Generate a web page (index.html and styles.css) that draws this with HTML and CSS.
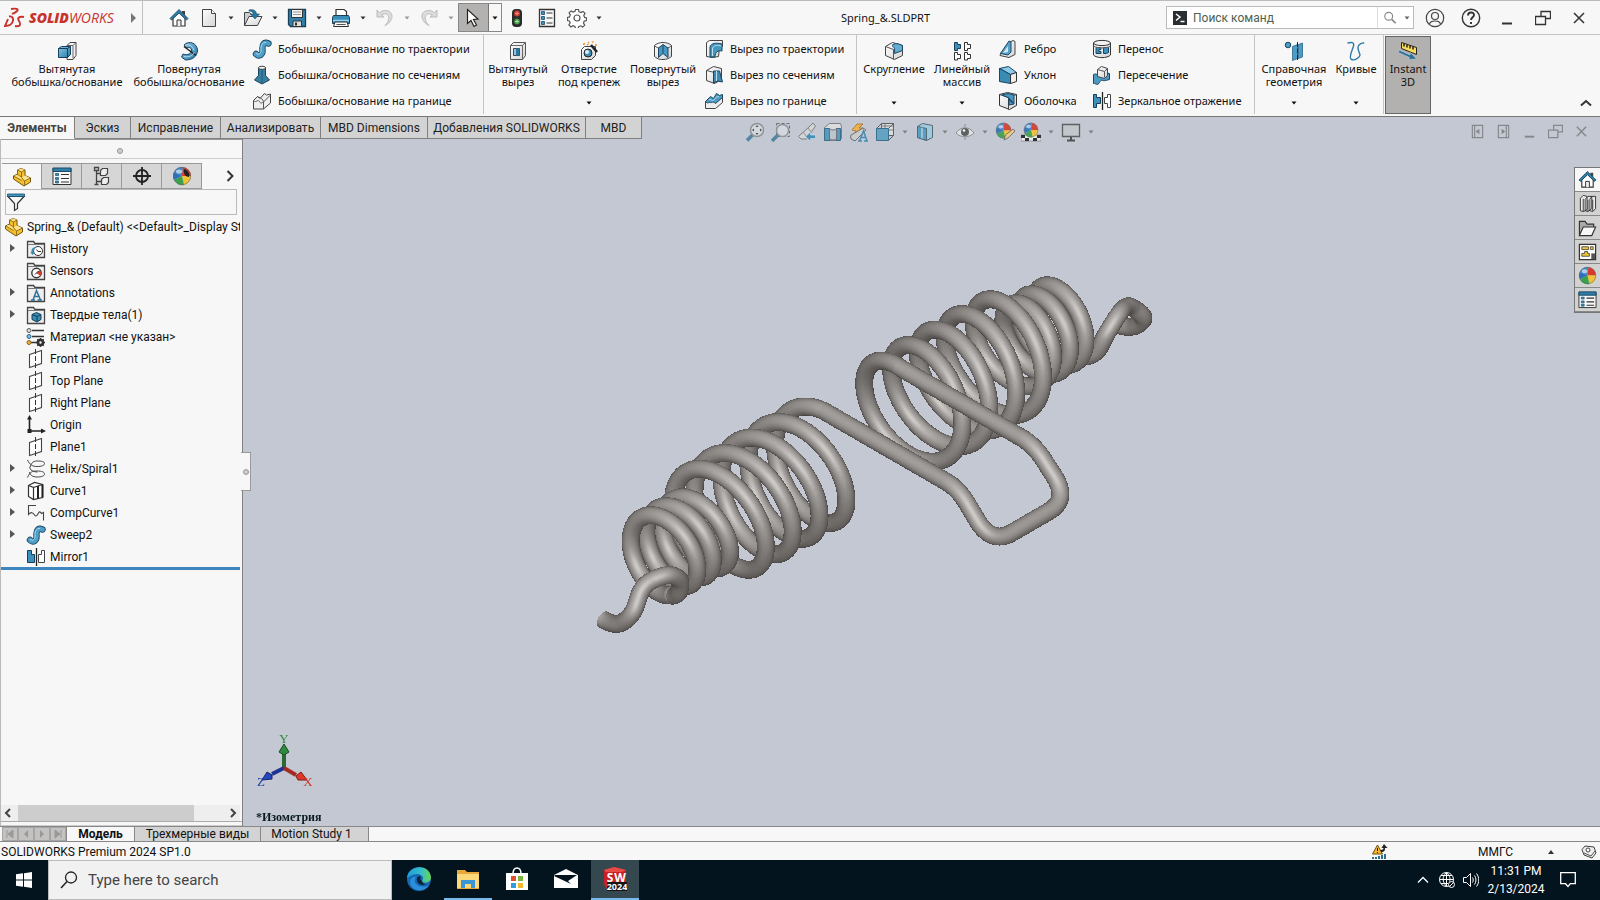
FILE: index.html
```html
<!DOCTYPE html>
<html lang="ru">
<head>
<meta charset="utf-8">
<title>Spring_&amp;.SLDPRT</title>
<link rel="stylesheet" href="styles.css">
</head>
<body>
<svg class="sprite" aria-hidden="true">
<defs>
<linearGradient id="gb" x1="0" y1="0" x2="1" y2="1"><stop offset="0" stop-color="#8cc8e6"/><stop offset="1" stop-color="#2478a4"/></linearGradient>
<linearGradient id="gw" x1="0" y1="0" x2="1" y2="1"><stop offset="0" stop-color="#fff"/><stop offset="1" stop-color="#d4d4d4"/></linearGradient>
<linearGradient id="edgeg" x1="0" y1="0" x2="1" y2="0"><stop offset="0" stop-color="#1f9ad8"/><stop offset=".6" stop-color="#35c1c9"/><stop offset="1" stop-color="#6bd34c"/></linearGradient>
</defs>
<symbol id="caret" viewBox="0 0 8 8"><path d="M1.500 2.500h5L4 5.500z" fill="currentColor"/></symbol>
<symbol id="home" viewBox="0 0 20 20"><path d="M4 10v8h12v-8l-6-6z" fill="#fff" stroke="#333" stroke-width="1.2"/><path d="M8 18v-6h4v6" fill="#eee" stroke="#333"/><path d="M13 3h3v5l-3-3z" fill="#444"/><path d="M1 10.500L10 1.500l9 9-1.500 1.500L10 5l-7.500 7z" fill="#2f7ea8" stroke="#143f5b" stroke-width=".8"/></symbol>
<symbol id="new" viewBox="0 0 20 20"><path d="M3.500 1.500h9l4 4v13h-13z" fill="url(#gw)" stroke="#444"/><path d="M12.500 1.500v4h4" fill="#fff" stroke="#444"/></symbol>
<symbol id="open" viewBox="0 0 20 20"><path d="M1.500 17.500v-13h5l2 2h6v3" fill="#ccc" stroke="#444"/><path d="M1.500 17.500L6 8.500h13l-4.500 9z" fill="url(#gw)" stroke="#444"/><path d="M6 2c4-1 7 0 7.500 4h3l-4.500 5-4.500-5h3C10 4 8 3 6 3z" fill="#2878a0" stroke="#174a66" stroke-width=".6"/></symbol>
<symbol id="save" viewBox="0 0 20 20"><path d="M1.500 1.500h17v17h-15l-2-2z" fill="#2f81ab" stroke="#1b3f54" stroke-width="1.300"/><path d="M4.500 1.500h11v8h-11z" fill="#f4f4f4" stroke="#333"/><path d="M6 4h8M6 6.500h8" stroke="#999"/><path d="M6 13h8.500v5.500H6z" fill="#ddd" stroke="#333"/><path d="M8 14.500h2v3H8z" fill="#333"/></symbol>
<symbol id="print" viewBox="0 0 20 20"><path d="M5 8V1.500h8l2.500 2V8" fill="#fff" stroke="#333" stroke-width="1.200"/><path d="M2.500 7.500h15l1 2v6h-17v-6z" fill="#3a8dba" stroke="#173f59"/><path d="M2 12.500h16" stroke="#99d6f2" stroke-width="1.500"/><path d="M4 14h12l1.500 4.500h-15z" fill="#f8f8f8" stroke="#333"/><path d="M5.500 16.500h9" stroke="#555"/></symbol>
<symbol id="undo" viewBox="0 0 20 20"><path d="M2 2v7h7L6.500 7C11 4 15 7 13.500 12c-.500 2-1.500 3.500-3.500 5.500C18 14 20 4 11.500 2.500 8.500 2 6 3.500 4.500 5z" fill="#ddd" stroke="#bbb"/></symbol>
<symbol id="cursor" viewBox="0 0 20 20"><path d="M3.500 1.500v14l3.500-3 3 6 2.500-1.500-3-5.500 4.500-.500z" fill="#fff" stroke="#222" stroke-width="1.200"/></symbol>
<symbol id="light" viewBox="0 0 20 20"><rect x="5" y="1" width="10" height="18" rx="4" fill="#2b2b2b"/><circle cx="10" cy="5.500" r="3" fill="#c73a30"/><circle cx="10" cy="13.500" r="3" fill="#3a9444"/><path d="M8 5.500h4M10 3.500v4" stroke="#ea8b80"/><path d="M8 13.500h4M10 11.500v4" stroke="#a7e0a9"/></symbol>
<symbol id="options" viewBox="0 0 20 20"><path d="M2.500 1.500h15v17h-15z" fill="#f8f8f8" stroke="#333" stroke-width="1.300"/><path d="M4.500 3.500h3v3h-3zM4.500 8.500h3v3h-3zM4.500 13.500h3v3h-3z" fill="#3b91c0" stroke="#1c4964" stroke-width=".8"/><path d="M9.500 5h6M9.500 10h6M9.500 15h6" stroke="#333"/></symbol>
<symbol id="gear" viewBox="0 0 20 20"><path d="M8.500 1.500h3l.500 2.300 2 .800 2-1.200 2 2-1.200 2 .800 2 1.900.600v2.500l-2.300.600-.700 2 1.200 2-2 2-2-1.300-2 .800-.600 1.900H8.500l-.600-2-2-.800-2 1.300-2-2 1.300-2-.900-2-1.800-.500V9.500l2-.600.800-2-1.200-2 2-2 2 1.200 1.900-.800z" fill="#fff" stroke="#555" stroke-width="1.200"/><circle cx="10" cy="10" r="3" fill="none" stroke="#555" stroke-width="1.200"/></symbol>
<symbol id="prompt" viewBox="0 0 14 14"><path d="M0 0h14v14H0z" fill="#2b2f33"/><path d="M3 3l4 3-4 3.500M7.500 10.500h4" stroke="#fff" stroke-width="1.500" fill="none"/></symbol>
<symbol id="lens" viewBox="0 0 16 16"><circle cx="6.500" cy="6" r="4.500" fill="none" stroke="#888" stroke-width="1.300"/><path d="M10 9.500l4.500 4.500" stroke="#888" stroke-width="2"/></symbol>
<symbol id="user" viewBox="0 0 20 20"><circle cx="10" cy="10" r="8.700" fill="none" stroke="#444" stroke-width="1.200"/><circle cx="10" cy="8" r="3.500" fill="none" stroke="#444" stroke-width="1.200"/><path d="M4.500 16c1-4 10-4 11 0" fill="none" stroke="#444" stroke-width="1.200"/></symbol>
<symbol id="help" viewBox="0 0 20 20"><circle cx="10" cy="10" r="8.700" fill="none" stroke="#333" stroke-width="1.400"/><path d="M7 7.500c0-4 6-4 6-.500 0 2-3 2.500-3 5M10 14v2" fill="none" stroke="#333" stroke-width="1.900"/></symbol>
<symbol id="min" viewBox="0 0 16 16"><path d="M3 13.500h10" stroke="currentColor" stroke-width="2"/></symbol>
<symbol id="restore" viewBox="0 0 16 16"><path d="M6 6V1.500h9.500v7H11M.500 6.500h10v8H.500z" fill="none" stroke="currentColor" stroke-width="1.300"/></symbol>
<symbol id="close" viewBox="0 0 16 16"><path d="M3 3l10 10M13 3L3 13" stroke="currentColor" stroke-width="1.500"/></symbol>
<symbol id="extrude" viewBox="0 0 20 20"><path d="M10 4.500l3-3h6v13l-3 4h-6z" fill="#f4f4f4" stroke="#444"/><path d="M16 4.500v13M10 4.500h6l3-3" fill="none" stroke="#666"/><path d="M1.500 7.500l3-2h9v8l-3 3h-9z" fill="url(#gb)" stroke="#173f59"/><path d="M1.500 7.500h9v9M10.500 7.500l3-2" fill="none" stroke="#173f59"/></symbol>
<symbol id="revolve" viewBox="0 0 20 20"><path d="M5 4C10-1 18 2 18.500 9c0 7-6 10-12 10l-4-3 1.500-3c5 2 9-1 8.500-4C12 6 9 6 7.500 7z" fill="url(#gb)" stroke="#1a4560"/><path d="M5 5.500l12 9" stroke="#222" stroke-width="1.500"/><path d="M6 4.500c4-2 8 1 9 5M5 15.500c5 1 9-1 10-4" fill="none" stroke="#b7ddf0"/></symbol>
<symbol id="sweep" viewBox="0 0 20 20"><path d="M4 15c3 3 7 1 6.500-4.500C10 5.500 12 2.500 16.500 4.500" fill="none" stroke="#1a4560" stroke-width="6.400" stroke-linecap="round"/><path d="M4 15c3 3 7 1 6.500-4.500C10 5.500 12 2.500 16.500 4.500" fill="none" stroke="#4f9fc8" stroke-width="4.600" stroke-linecap="round"/><path d="M4 14.500c4 2 5.500-1 5-5C9 5.500 11 3 14 3.500" fill="none" stroke="#a9d6ec"/></symbol>
<symbol id="loft" viewBox="0 0 20 20"><path d="M6.500 2.500h7v8l4 4.500-7.500 4-7.500-4 4-4.500z" fill="#377f9f" stroke="#1a4560"/><path d="M10 4v15" stroke="#225c7c"/><ellipse cx="10" cy="2.800" rx="3.500" ry="1.600" fill="#f3f3f3" stroke="#444"/></symbol>
<symbol id="bound" viewBox="0 0 20 20"><path d="M1.500 9.500l4-4 3 1.500 4-4.500 2 1.500 4-1v9l-7 6h-10z" fill="#eee" stroke="#444"/><path d="M1.500 9.500c3 3 4-2 6 1s2 1 4 .500v7M11.500 11l7-7M5.500 5.500c2 3 4 0 6 5" fill="none" stroke="#555"/></symbol>
<symbol id="cutex" viewBox="0 0 20 20"><path d="M2.500 4.500l3-3h12v13l-3 4h-12z" fill="url(#gw)" stroke="#555"/><path d="M2.500 4.500h12v14M14.500 4.500l3-3" fill="none" stroke="#666"/><path d="M5.500 7.500h6v7h-6z" fill="#8fc7e4" stroke="#444"/><path d="M8 7.500h3.500v7H8z" fill="#2878a4"/></symbol>
<symbol id="hole" viewBox="0 0 20 20"><path d="M2.500 8.500l3-3h11v9l-4 4h-10z" fill="url(#gw)" stroke="#444"/><circle cx="9" cy="12" r="4" fill="#3d8fb9" stroke="#222"/><circle cx="8" cy="11" r="2" fill="#dff0f8"/><path d="M12 4l6 7" stroke="#222" stroke-width="2.500"/><path d="M4 3.500l2-1M9 1l1 1M13 1.500l1.500-1M16 4h2M8 4l1.500-1" stroke="#e8952f" stroke-width="1.500"/></symbol>
<symbol id="cutrev" viewBox="0 0 20 20"><path d="M1.500 4.500v11c4 3 5 3 8.500 3s6-1 8.500-3v-11c-4-4-13-4-17 0z" fill="url(#gw)" stroke="#444"/><path d="M1.500 4.500c1.500 2 4 2.500 6 2.500h6c2 0 4-1 5-2.500" fill="none" stroke="#555"/><path d="M5.500 7L10 3.500 15 7v9.500l-5-4-4.500 4z" fill="#4799c3" stroke="#1a4560"/><path d="M10 4v8" stroke="#1a4560"/></symbol>
<symbol id="cutsweep" viewBox="0 0 20 20"><path d="M2.500 3.500l3-2h13v6l-3 1-1 9-6 1-6-1z" fill="url(#gw)" stroke="#444"/><path d="M6 18V8c1-4 6-4.500 12-3v7c-4-1-7 1-7 6z" fill="#4796bd" stroke="#1a4560"/><path d="M8.500 17V9c2-3 5-3 9-2" fill="none" stroke="#b9def0"/></symbol>
<symbol id="cutloft" viewBox="0 0 20 20"><path d="M2.500 5.500l7-4 8 2v11l-7 4-8-3z" fill="url(#gw)" stroke="#444"/><path d="M2.500 5.500l8 2v11" fill="none" stroke="#555"/><path d="M9.500 6h6l3 11-5-1-4 2z" fill="#3c8ab1" stroke="#1a4560"/><path d="M12.500 6v10" stroke="#b9def0"/></symbol>
<symbol id="cutbound" viewBox="0 0 20 20"><path d="M1.500 10.500v7h10l7-6v-7l-7 6z" fill="#eee" stroke="#444"/><path d="M1.500 10.500l5-5 3 2 3-5 3 2 3-1v3l-7 6c-3-3-4 0-5-1s-3 2-5-1z" fill="#4b9ac2" stroke="#1a4560"/><path d="M5 9c2-2 3 2 5 0s2-4 5-3" fill="none" stroke="#bfe2f2"/></symbol>
<symbol id="fillet" viewBox="0 0 20 20"><path d="M1.500 5.500l7-4 10 3v10l-8 4-9-4z" fill="url(#gw)" stroke="#444"/><path d="M1.500 5.500l8 3v10" fill="none" stroke="#555"/><path d="M8 4.500c3-3 6-2 10.500 0v5l-8 3c0-4 1-5-2.500-8z" fill="#64acd0" stroke="#1a4560"/></symbol>
<symbol id="pattern" viewBox="0 0 20 20"><path d="M2.500 1.500h3v2h3v4h-3v2h-3z" fill="#3d8fbc" stroke="#173f59"/><path d="M12.500 1.500h3v2h3v4h-3v2h-3zM2.500 11.500h3v2h3v4h-3v1.500h-3zM12.500 11.500h3v2h3v4h-3v1.500h-3z" fill="#fff" stroke="#333"/></symbol>
<symbol id="rib" viewBox="0 0 20 20"><path d="M11 3.500l4-2 2 1v13l-6 3-9-2 1-3h6z" fill="url(#gw)" stroke="#444"/><path d="M2.500 14.500L11 2l2 1v10l-3 3z" fill="#57a2c9" stroke="#1a4560"/><path d="M5 14l5-7v6z" fill="#cfe8f4"/></symbol>
<symbol id="draft" viewBox="0 0 20 20"><path d="M1.500 3.500l9-2 8 6-6 2z" fill="#8ccbe9" stroke="#1a4560"/><path d="M1.500 3.500l11 6v9l-11-2z" fill="#3b8cb4" stroke="#1a4560"/><path d="M12.500 9.500l6-2v9l-6 2z" fill="#eee" stroke="#333"/></symbol>
<symbol id="shell" viewBox="0 0 20 20"><path d="M1.500 3.500l8-2 9 2v11l-7 4-10-4z" fill="url(#gw)" stroke="#333"/><path d="M1.500 3.500l9 3 8-3M10.500 6.500v12" fill="none" stroke="#444"/><path d="M4 4l6-1.500L16 4v9l-5 1V7z" fill="#4a98c1" stroke="#1a4560"/><path d="M11 8l4 4" stroke="#173f59" stroke-width="1.500"/></symbol>
<symbol id="wrap" viewBox="0 0 20 20"><path d="M1.500 4v12c3 3.500 14 3.500 17 0V4" fill="url(#gw)" stroke="#333"/><ellipse cx="10" cy="4" rx="8.500" ry="2.600" fill="#f2f2f2" stroke="#333"/><path d="M4 8.500h5v2H7v2h2v2H4zM11.500 8.500h5v5l-2 1h-3z" fill="#3d8fbc" stroke="#1a4560"/><path d="M1.500 7c3 2.500 14 2.500 17 0" fill="none" stroke="#666"/></symbol>
<symbol id="inter" viewBox="0 0 20 20"><path d="M1.500 9.500c3-2 4 2 7 0s4-2 9-1v6l-4 1c-3 1-4-2-6 2s-5 0-6 1z" fill="#4b9ac2" stroke="#1a4560"/><path d="M5.500 4.500l4-3 6 2v7l-3 3-7-2z" fill="url(#gw)" stroke="#444"/><path d="M5.500 4.500l7 2 3-3M12.500 6.500v6" fill="none" stroke="#555"/></symbol>
<symbol id="mirror" viewBox="0 0 20 20"><path d="M1.500 3.500h3v3h4v6h-4v4h-3z" fill="#3d8fbc" stroke="#173f59"/><path d="M10.500 1v18" stroke="#222" stroke-width="1.300"/><path d="M18.500 3.500h-3v3h-3v6h3v4h3z" fill="#fff" stroke="#444"/></symbol>
<symbol id="mirror2" viewBox="0 0 20 20"><path d="M1.500 3.500h4v4h3v8h-7z" fill="#3d8fbc" stroke="#173f59"/><path d="M10.500 1v18" stroke="#222" stroke-width="1.300"/><path d="M18.500 3.500h-3v4h-3v8h6z" fill="#fff" stroke="#444"/></symbol>
<symbol id="refgeo" viewBox="0 0 20 20"><circle cx="4" cy="4" r="2.800" fill="#4a9ec8" stroke="#1a4560"/><path d="M8.500 5.500l5-2v14l-5 2z" fill="#4b9dc8" stroke="#2c6788" stroke-width=".8"/><path d="M14.500 3.500l4-1.500v14l-4 1.500z" fill="#4b9dc8" stroke="#2c6788" stroke-width=".8"/><path d="M13.500 1v18" stroke="#222" stroke-dasharray="5 1.500"/></symbol>
<symbol id="curves" viewBox="0 0 20 20"><path d="M1.500 2c4-1 7-1 6 3S2 17 5.500 18.500 14 16 14 14s-4-7-1-10 4-1 5-2.500" fill="none" stroke="#2d7ba6" stroke-width="1.400"/></symbol>
<symbol id="instant" viewBox="0 0 20 20"><path d="M3.500 1.500l15 5v7l-15-6z" fill="#fbdc5a" stroke="#222"/><path d="M6 2.500v3M9 3.500v3M12 4.500v3M15 5.500v3" stroke="#222" stroke-width="1.500"/><path d="M1 9l11 5 .500-2.500 6 6.500-8 .500 1-2-11-5z" fill="#2d6e95" stroke="#b8cfdb" stroke-width=".6"/></symbol>
<symbol id="part" viewBox="0 0 20 20"><path d="M5.500 3l3.500-1.500 4 1.500v5.500l5.500 2.500v4L12 19 1.500 12V9l4-2z" fill="#f6bf2c" stroke="#6e5512"/><path d="M5.500 3L9 1.500 13 3 9.500 5zM2 9l3.500-1.500L9.500 10v2.500L12.500 14z" fill="#fbdf80"/><path d="M9.500 10.500l3.500-2 5 2.500-5.500 3z" fill="#fbe293"/><path d="M5.500 3l4 2L13 3M9.500 5v5.500l3 3.500 6-3M12.500 14v5M5.500 3v4.500L9.500 10M1.500 9l8 4.500" fill="none" stroke="#8b6a15" stroke-width=".9"/></symbol>
<symbol id="prop" viewBox="0 0 20 20"><path d="M1 2.500h18v16H1z" fill="#f8f8f8" stroke="#333"/><path d="M1 2h18v3.500H1z" fill="#2e7eaa" stroke="#1b4a64"/><path d="M3.500 7.500h3v2h-3zM3.500 11.500h3v2h-3zM3.500 15h3v2h-3z" fill="#3b91c0" stroke="#1b4a64" stroke-width=".7"/><path d="M9 8.500h8M9 12.500h8M9 16h8" stroke="#333" stroke-width="1.200"/></symbol>
<symbol id="config" viewBox="0 0 20 20"><path d="M2.500 1.500h4v3h-4zM4.500 4.500v14M4.500 7.500h5M4.500 15.500h5M2.500 18.500h4" stroke="#444" stroke-width="1.300" fill="none"/><path d="M8.500 4.500l2-2h5v5l-2 2h-5zM9.500 13.500l2-2h5v5l-2 2h-5z" fill="#eee" stroke="#444" stroke-width="1.200"/></symbol>
<symbol id="dim" viewBox="0 0 20 20"><circle cx="10" cy="10" r="6" fill="none" stroke="#222" stroke-width="1.800"/><path d="M10 1v18M1 10h18" stroke="#222" stroke-width="1.800"/></symbol>
<symbol id="ball" viewBox="0 0 20 20"><path d="M10 10L2 6a9 9 0 0 1 9-5z" fill="#3b86c8"/><path d="M10 10l1-9a9 9 0 0 1 8 9z" fill="#d8392b"/><path d="M10 10h9a9 9 0 0 1-7 9z" fill="#f1c136"/><path d="M10 10l2 9a9 9 0 0 1-10-5z" fill="#3aa14b"/><path d="M10 10l-8 4a9 9 0 0 1 0-8z" fill="#2d70b8"/><circle cx="10" cy="10" r="8.700" fill="none" stroke="#666" stroke-width=".6"/><ellipse cx="7" cy="5.500" rx="3" ry="2" fill="#fff" opacity=".6"/></symbol>
<symbol id="ballw" viewBox="0 0 20 20"><use href="#ball"/><path d="M12 3c4 1 6 5 5 8-3 0-6-3-5-8z" fill="#222"/></symbol>
<symbol id="filter" viewBox="0 0 20 20"><path d="M2 4.500l6.500 7v7l3-2v-5l6.500-7z" fill="#f7f7f7" stroke="#333" stroke-width="1.200"/><path d="M1.500 2h17v2.500h-17z" fill="#3f97c4" stroke="#1c4c68" stroke-width=".8"/></symbol>
<symbol id="folder" viewBox="0 0 20 20"><path d="M1.500 4V2.500h6l1.500 2h9.500v14h-17z" fill="#eee" stroke="#444" stroke-width="1.300"/><path d="M2 5.500h16" stroke="#777"/></symbol>
<symbol id="history" viewBox="0 0 20 20"><use href="#folder"/><circle cx="12" cy="12" r="4.500" fill="#fff" stroke="#333"/><path d="M10.500 10.500l1.500 2h3" stroke="#333" fill="none"/><path d="M4 13l2.500 3L9 13.500H7.500c0-3 1-4 3.500-5-4-1-6 1.500-5.500 5z" fill="#3a8ab2"/></symbol>
<symbol id="sensor" viewBox="0 0 20 20"><use href="#folder"/><circle cx="10.500" cy="12" r="4.700" fill="#fff" stroke="#333" stroke-width="1.400"/><path d="M10.500 12l3-3 2 3-1 3z" fill="#d8392b"/><path d="M9 13.500l3.500-3.500" stroke="#222"/></symbol>
<symbol id="annot" viewBox="0 0 20 20"><use href="#folder"/><path d="M5 17h4M11.500 17H16M7 17l3.500-9.500L14.500 17M8.500 13.500h4.500" stroke="#2b7199" stroke-width="1.500" fill="none"/></symbol>
<symbol id="solid" viewBox="0 0 20 20"><use href="#folder"/><path d="M6 9.500l4.500-2 4.500 2v5l-4 2.500-5-2.500z" fill="#3a8cb7" stroke="#123c54"/><path d="M6 9.500l5 2v5M11 11.500l4-2" fill="none" stroke="#123c54"/></symbol>
<symbol id="material" viewBox="0 0 20 20"><path d="M6 3.500h12M6 9.500h12M5 15.500h6" stroke="#333" stroke-width="1.600"/><circle cx="3" cy="3.500" r="2" fill="#ddd" stroke="#555"/><circle cx="3" cy="9.500" r="2" fill="#7cc0e4" stroke="#2a6788"/><circle cx="3" cy="15.500" r="2" fill="#f3b13b" stroke="#84601b"/><circle cx="14.500" cy="15.500" r="2.500" fill="none" stroke="#333" stroke-width="2.600"/><path d="M14.500 11v2M14.500 18v2M10 15.500h2M17 15.500h2M11.300 12.300l1.500 1.500M17.700 12.300l-1.500 1.500M11.300 18.700l1.500-1.500M17.700 18.700l-1.500-1.500" stroke="#333" stroke-width="1.500"/></symbol>
<symbol id="plane" viewBox="0 0 20 20"><path d="M3.500 5.500l12-4v13l-12 4z" fill="#fff" stroke="#444" stroke-width="1.100"/><path d="M9.500 0v20" stroke="#333" stroke-dasharray="5 2"/></symbol>
<symbol id="origin" viewBox="0 0 20 20"><path d="M3.500 3v13h13" fill="none" stroke="#222" stroke-width="1.600"/><path d="M1 4.500L3.500 0 6 4.500zM15 13.500l5 2.500-5 2.500zM1.500 14h4v4h-4z" fill="#222"/></symbol>
<symbol id="helix" viewBox="0 0 20 20"><path d="M1.500 1c2.500 5 5 6.500 9.500 6.500s7.500-1 7.500-3-3-2.500-7.500-2.500S5 5 4 8s4 5 7.500 5M1.500 18.500C4 13 6 12 11 12s7.500 1 7.500 3-3 3-7.500 3-7-2-7.500-5" fill="none" stroke="#444"/></symbol>
<symbol id="curve" viewBox="0 0 20 20"><path d="M2.500 4.500l6-3 8 2v13l-9 2-5-3z" fill="#fff" stroke="#333" stroke-width="1.200"/><path d="M2.500 4.500l5 2v12M7.500 6.500l9-3" fill="none" stroke="#333" stroke-width="1.200"/><path d="M12 5v12.500M16.500 3.500v13" stroke="#222" stroke-width="2"/></symbol>
<symbol id="comp" viewBox="0 0 20 20"><path d="M10 2.500H2.500v9c2.500-3 4.500-2 6 .500s3 0 4-2 2-1 3 .500l2-1v8" fill="none" stroke="#444" stroke-width="1.100"/></symbol>
<symbol id="zoomfit" viewBox="0 0 20 20"><path d="M2 18.500l7-7" stroke="#4a7f9c" stroke-width="3.500"/><circle cx="12" cy="8" r="6.500" fill="#d4dade" stroke="#8b8f93" stroke-width="1.500"/><path d="M12 3l1.500 2h-3zM12 13l1.500-2h-3zM7 8l2-1.500v3zM17 8l-2-1.500v3z" fill="#444"/></symbol>
<symbol id="zoomarea" viewBox="0 0 20 20"><path d="M5.500 1.500h13v13h-13z" fill="none" stroke="#666" stroke-dasharray="3 2"/><path d="M1 19l7-7" stroke="#4a7f9c" stroke-width="3.500"/><circle cx="11.500" cy="8.500" r="6" fill="#d4dade" stroke="#8b8f93" stroke-width="1.500"/></symbol>
<symbol id="prev" viewBox="0 0 20 20"><path d="M1.500 14.500L13 4l3-3 2.500 3-9 13H4z" fill="#d5d5d5" stroke="#777"/><path d="M6 10l4 5M11 6l3 4" stroke="#888"/><path d="M8.500 14.500l5-4.500v3h5v3.500h-5v3z" fill="#3b8ab2" stroke="#d4e4ec" stroke-width=".6"/></symbol>
<symbol id="section" viewBox="0 0 20 20"><path d="M1.500 5.500l5-4h11l1 3v12l-3 2h-14z" fill="#ddd" stroke="#777"/><path d="M1.500 6.500h5v12h-5zM13.500 6.500h4v12h-4z" fill="#4c97bd" stroke="#31657f"/><path d="M6.500 6.500c2 2 5 2 7 0v10c-2 2-5 2-7 0z" fill="#bcc5cb" stroke="#667"/></symbol>
<symbol id="annview" viewBox="0 0 20 20"><path d="M3 8l5-6h6l-4 4h4L4 15l3-6z" fill="#f0b040" stroke="#a26a18" stroke-width=".8"/><path d="M1.500 13.500L14 6l3 2L6 19l-4-2z" fill="#ccc" stroke="#666"/><path d="M9 19h4M15 19h4M10.500 19l4-10 3.500 10M12 15.500h5" stroke="#3c88ae" stroke-width="1.500" fill="none"/></symbol>
<symbol id="orient" viewBox="0 0 20 20"><path d="M6.500 1.500h12v12h-12zM1.500 6.500l5-5M13.500 6.500l5-5M13.500 18.500l5-5" fill="#ddd" stroke="#555"/><path d="M10 2v12M6 8h12M6 4h12" stroke="#777"/><path d="M1.500 6.500h12v12h-12z" fill="#5a9fc2" stroke="#2e6582"/></symbol>
<symbol id="display" viewBox="0 0 20 20"><path d="M2.500 4.500l5-3 10 2v12l-6 3-9-3z" fill="#9dc9de" stroke="#46606c"/><path d="M2.500 4.500l9 2v12l-9-3z" fill="#4f9abf" stroke="#46606c"/><path d="M7 5.500v11" stroke="#d7e8f0"/></symbol>
<symbol id="eye" viewBox="0 0 20 20"><path d="M1 11C6 4 14 4 19 11c-5 5-13 5-18 0z" fill="#e4e6e8" stroke="#888"/><circle cx="10" cy="10" r="4" fill="#555"/><circle cx="9" cy="8.500" r="1.300" fill="#fff"/><path d="M10 2v3M10 15v3" stroke="#888"/></symbol>
<symbol id="appear" viewBox="0 0 20 20"><use href="#ball" width="17" height="17"/><path d="M9 18l1.500-5L18 7l2 2-7 7z" fill="#f1c87d" stroke="#555" stroke-width=".8"/></symbol>
<symbol id="scene" viewBox="0 0 20 20"><path d="M0 13h20v6H0z" fill="#eee" stroke="#444" stroke-width=".5"/><path d="M0 13h4v3H0zM8 16H4v3h4zM12 16h4v3h-4zM16 13h4v3h-4z" fill="#222"/><use href="#ball" x="2" width="16" height="16"/></symbol>
<symbol id="monitor" viewBox="0 0 20 20"><path d="M1.500 2.500h17v12h-17z" fill="#c3c7ca" stroke="#555" stroke-width="1.300"/><path d="M10 15v3M6 18.500h8" stroke="#444" stroke-width="2"/></symbol>
<symbol id="dockl" viewBox="0 0 16 16"><path d="M2.500 1.500h11v13h-11zM5 1.500v13" fill="none" stroke="currentColor" stroke-width="1.200"/><path d="M10 5v6L6 8z" fill="currentColor"/></symbol>
<symbol id="books" viewBox="0 0 20 20"><path d="M2.500 4.500l3-3 4 1v14l-4 2-3-1zM7.500 5.500l3-3 4 0v13l-4 3-3-1zM12.500 5.500l2-3h4v13l-3 3-3-1z" fill="#eee" stroke="#333"/><path d="M5.500 5v13M10.500 6v12M15.500 6v12" stroke="#333"/></symbol>
<symbol id="ofolder" viewBox="0 0 20 20"><path d="M1.500 18V3.500h6l2 3h7v4" fill="#aaa" stroke="#333" stroke-width="1.200"/><path d="M1.500 18.500l4-9h13l-4 9z" fill="#f8f8f8" stroke="#333" stroke-width="1.200"/></symbol>
<symbol id="palette" viewBox="0 0 20 20"><path d="M1.500 2.500h17v16h-17z" fill="#fff" stroke="#333" stroke-width="1.300"/><path d="M4 5h7v3H4zM13 5h3v3h-3zM4 15h8v-3h-2v-2H7v2H4z" fill="#f2c538" stroke="#333" stroke-width=".8"/><path d="M14 12h4v6h-4z" fill="#555"/></symbol>
</svg>

<header class="titlebar">
  <div class="brand">
    <svg class="ds" viewBox="0 0 22 22" fill="none" stroke="#c8322b"><path d="M7 2c5-1 8 0 6 2s-3 2-5 3M5 9.500C11 8 11 19 1 19l3-7" stroke-width="1.900"/><path d="M20 10c-5-1-7 1-5 4s2 6-4 5" stroke-width="1.900"/></svg>
    <span class="brand-name"><b>SOLID</b>WORKS</span>
    <button class="play" aria-label="Меню"></button>
  </div>
  <div class="quick">
    <button class="q"><svg class="i"><use href="#home"/></svg></button>
    <button class="q"><svg class="i"><use href="#new"/></svg></button><button class="c"><svg><use href="#caret"/></svg></button>
    <button class="q"><svg class="i"><use href="#open"/></svg></button><button class="c"><svg><use href="#caret"/></svg></button>
    <button class="q"><svg class="i"><use href="#save"/></svg></button><button class="c"><svg><use href="#caret"/></svg></button>
    <button class="q"><svg class="i"><use href="#print"/></svg></button><button class="c"><svg><use href="#caret"/></svg></button>
    <button class="q"><svg class="i"><use href="#undo"/></svg></button><button class="c off"><svg><use href="#caret"/></svg></button>
    <button class="q"><svg class="i flip"><use href="#undo"/></svg></button><button class="c off"><svg><use href="#caret"/></svg></button>
    <span class="select-tool"><button class="sel"><svg class="i"><use href="#cursor"/></svg></button><button class="selc"><svg><use href="#caret"/></svg></button></span>
    <button class="q"><svg class="i"><use href="#light"/></svg></button>
    <button class="q"><svg class="i"><use href="#options"/></svg></button>
    <button class="q"><svg class="i"><use href="#gear"/></svg></button><button class="c"><svg><use href="#caret"/></svg></button>
  </div>
  <h1 class="doc-title">Spring_&amp;.SLDPRT</h1>
  <div class="title-right">
    <label class="search"><svg class="prompt"><use href="#prompt"/></svg><input type="text" placeholder="Поиск команд" aria-label="Поиск команд"><span class="search-go"><svg class="lens"><use href="#lens"/></svg><svg class="sc"><use href="#caret"/></svg></span></label>
    <button class="w"><svg class="i"><use href="#user"/></svg></button>
    <button class="w"><svg class="i"><use href="#help"/></svg></button>
    <button class="w"><svg class="s"><use href="#min"/></svg></button>
    <button class="w"><svg class="s"><use href="#restore"/></svg></button>
    <button class="w"><svg class="s"><use href="#close"/></svg></button>
  </div>
</header>

<nav class="ribbon">
  <section class="group g1">
    <button class="big"><svg class="i"><use href="#extrude"/></svg><span>Вытянутая<br>бобышка/основание</span></button>
    <button class="big"><svg class="i"><use href="#revolve"/></svg><span>Повернутая<br>бобышка/основание</span></button>
    <div class="list">
      <button class="row"><svg class="i"><use href="#sweep"/></svg>Бобышка/основание по траектории</button>
      <button class="row"><svg class="i"><use href="#loft"/></svg>Бобышка/основание по сечениям</button>
      <button class="row"><svg class="i"><use href="#bound"/></svg>Бобышка/основание на границе</button>
    </div>
  </section>
  <section class="group g2">
    <button class="big short"><svg class="i"><use href="#cutex"/></svg><span>Вытянутый<br>вырез</span></button>
    <button class="big"><svg class="i"><use href="#hole"/></svg><span>Отверстие<br>под крепеж</span><svg class="dc"><use href="#caret"/></svg></button>
    <button class="big"><svg class="i"><use href="#cutrev"/></svg><span>Повернутый<br>вырез</span></button>
    <div class="list">
      <button class="row"><svg class="i"><use href="#cutsweep"/></svg>Вырез по траектории</button>
      <button class="row"><svg class="i"><use href="#cutloft"/></svg>Вырез по сечениям</button>
      <button class="row"><svg class="i"><use href="#cutbound"/></svg>Вырез по границе</button>
    </div>
  </section>
  <section class="group g3">
    <button class="big"><svg class="i"><use href="#fillet"/></svg><span>Скругление</span><svg class="dc"><use href="#caret"/></svg></button>
    <button class="big mid"><svg class="i"><use href="#pattern"/></svg><span>Линейный<br>массив</span><svg class="dc"><use href="#caret"/></svg></button>
    <div class="list">
      <button class="row"><svg class="i"><use href="#rib"/></svg>Ребро</button>
      <button class="row"><svg class="i"><use href="#draft"/></svg>Уклон</button>
      <button class="row"><svg class="i"><use href="#shell"/></svg>Оболочка</button>
    </div>
    <div class="list">
      <button class="row"><svg class="i"><use href="#wrap"/></svg>Перенос</button>
      <button class="row"><svg class="i"><use href="#inter"/></svg>Пересечение</button>
      <button class="row"><svg class="i"><use href="#mirror"/></svg>Зеркальное отражение</button>
    </div>
  </section>
  <section class="group g4">
    <button class="big"><svg class="i"><use href="#refgeo"/></svg><span>Справочная<br>геометрия</span><svg class="dc"><use href="#caret"/></svg></button>
    <button class="big narrow"><svg class="i"><use href="#curves"/></svg><span>Кривые</span><svg class="dc"><use href="#caret"/></svg></button>
  </section>
  <button class="big instant"><svg class="i"><use href="#instant"/></svg><span>Instant<br>3D</span></button>
  <button class="collapse" aria-label="Свернуть"><svg viewBox="0 0 12 8"><path d="M1 6.500l5-4.500 5 4.500" fill="none" stroke="#333" stroke-width="2"/></svg></button>
</nav>

<main class="workspace">
  <div class="tabs" role="tablist">
    <button class="tab on">Элементы</button><button class="tab">Эскиз</button><button class="tab">Исправление</button><button class="tab">Анализировать</button><button class="tab">MBD Dimensions</button><button class="tab">Добавления SOLIDWORKS</button><button class="tab">MBD</button>
  </div>
  <aside class="panel">
    <div class="grip"><i></i></div>
    <div class="ptabs">
      <button class="ptab on"><svg class="i"><use href="#part"/></svg></button>
      <button class="ptab"><svg class="i"><use href="#prop"/></svg></button>
      <button class="ptab"><svg class="i"><use href="#config"/></svg></button>
      <button class="ptab"><svg class="i"><use href="#dim"/></svg></button>
      <button class="ptab"><svg class="i"><use href="#ballw"/></svg></button>
      <button class="pmore" aria-label="Ещё"><svg viewBox="0 0 8 12"><path d="M1.500 1l5 5-5 5" fill="none" stroke="#333" stroke-width="2"/></svg></button>
    </div>
    <label class="filter"><svg class="i"><use href="#filter"/></svg><input type="text" aria-label="Фильтр"></label>
    <ul class="tree">
      <li class="root"><svg class="i"><use href="#part"/></svg>Spring_&amp; (Default) &lt;&lt;Default&gt;_Display State 1&gt;</li>
      <li class="kids"><svg class="i"><use href="#history"/></svg>History</li>
      <li><svg class="i"><use href="#sensor"/></svg>Sensors</li>
      <li class="kids"><svg class="i"><use href="#annot"/></svg>Annotations</li>
      <li class="kids"><svg class="i"><use href="#solid"/></svg>Твердые тела(1)</li>
      <li><svg class="i"><use href="#material"/></svg>Материал &lt;не указан&gt;</li>
      <li><svg class="i"><use href="#plane"/></svg>Front Plane</li>
      <li><svg class="i"><use href="#plane"/></svg>Top Plane</li>
      <li><svg class="i"><use href="#plane"/></svg>Right Plane</li>
      <li><svg class="i"><use href="#origin"/></svg>Origin</li>
      <li><svg class="i"><use href="#plane"/></svg>Plane1</li>
      <li class="kids"><svg class="i"><use href="#helix"/></svg>Helix/Spiral1</li>
      <li class="kids"><svg class="i"><use href="#curve"/></svg>Curve1</li>
      <li class="kids"><svg class="i"><use href="#comp"/></svg>CompCurve1</li>
      <li class="kids"><svg class="i"><use href="#sweep"/></svg>Sweep2</li>
      <li><svg class="i"><use href="#mirror2"/></svg>Mirror1</li>
    </ul>
    <div class="rollback"></div>
    <div class="hscroll"><svg viewBox="0 0 8 10"><path d="M6 1L2 5l4 4" fill="none" stroke="#444" stroke-width="2"/></svg><span class="track"><i></i></span><svg viewBox="0 0 8 10"><path d="M2 1l4 4-4 4" fill="none" stroke="#444" stroke-width="2"/></svg></div>
    <div class="foot"></div>
  </aside>
  <section class="viewport">
    <canvas id="model"></canvas>
    <div class="splitter"><i></i></div>
    <div class="hud">
      <button><svg class="i"><use href="#zoomfit"/></svg></button><button><svg class="i"><use href="#zoomarea"/></svg></button><button><svg class="i"><use href="#prev"/></svg></button><button><svg class="i"><use href="#section"/></svg></button><button><svg class="i"><use href="#annview"/></svg></button><button><svg class="i"><use href="#orient"/></svg></button><button class="hc"><svg><use href="#caret"/></svg></button><button><svg class="i"><use href="#display"/></svg></button><button class="hc"><svg><use href="#caret"/></svg></button><button><svg class="i"><use href="#eye"/></svg></button><button class="hc"><svg><use href="#caret"/></svg></button><button><svg class="i"><use href="#appear"/></svg></button><button><svg class="i"><use href="#scene"/></svg></button><button class="hc"><svg><use href="#caret"/></svg></button><button><svg class="i"><use href="#monitor"/></svg></button><button class="hc"><svg><use href="#caret"/></svg></button>
    </div>
    <div class="docwin">
      <button><svg><use href="#dockl"/></svg></button><button><svg class="flip"><use href="#dockl"/></svg></button><button><svg><use href="#min"/></svg></button><button><svg><use href="#restore"/></svg></button><button><svg><use href="#close"/></svg></button>
    </div>
    <div class="taskpane">
      <button class="on"><svg class="i"><use href="#home"/></svg></button><button><svg class="i"><use href="#books"/></svg></button><button><svg class="i"><use href="#ofolder"/></svg></button><button><svg class="i"><use href="#palette"/></svg></button><button><svg class="i"><use href="#ball"/></svg></button><button><svg class="i"><use href="#prop"/></svg></button>
    </div>
    <div class="triad">
      <svg viewBox="0 0 64 60"><path d="M30 35V20" stroke="#2a6b35" stroke-width="4"/><path d="M30 11l5 8-5 3-5-3z" fill="#2f8a3d" stroke="#174d20"/><path d="M30 35L18 41" stroke="#1d3494" stroke-width="4"/><path d="M8 47l5-8 5 3v4z" fill="#2447c0" stroke="#132468"/><path d="M30 35l12 7" stroke="#a52a22" stroke-width="4"/><path d="M53 47l-6-8-5 4 2 4z" fill="#e0362c" stroke="#7d1a14"/><text x="30" y="10" text-anchor="middle" fill="#2c8a3a">Y</text><text x="54" y="53" text-anchor="middle" fill="#d23228">X</text><text x="7" y="53" text-anchor="middle" fill="#2038a8">Z</text></svg>
      <p>*Изометрия</p>
    </div>
  </section>
</main>

<div class="modeltabs">
  <div class="navs">
    <button><svg viewBox="0 0 10 10"><path d="M2 1v8M8 1L3 5l5 4z" fill="#999" stroke="#999"/></svg></button><button><svg viewBox="0 0 10 10"><path d="M7 1L3 5l4 4z" fill="#999"/></svg></button><button><svg viewBox="0 0 10 10"><path d="M3 1l4 4-4 4z" fill="#999"/></svg></button><button><svg viewBox="0 0 10 10"><path d="M8 1v8M2 1l5 4-5 4z" fill="#999" stroke="#999"/></svg></button>
  </div>
  <button class="mtab on">Модель</button><button class="mtab">Трехмерные виды</button><button class="mtab study">Motion Study 1</button>
</div>
<footer class="status">
  <span>SOLIDWORKS Premium 2024 SP1.0</span>
  <div class="status-right">
    <svg class="warn" viewBox="0 0 16 16"><path d="M5.500 1L10.500 10H.500z" fill="#f5b733" stroke="#6f4e0c"/><path d="M5.500 4v3M5.500 8v1" stroke="#222"/><path d="M1 15v-2M4 15v-2M7 15v-3M10 15v-4M13 15v-5" stroke="#2d6e94" stroke-width="2"/><path d="M9 8c4 0 4-2 4-4h2.500L12 0 9.500 4h2c0 1-1 2-3 2z" fill="#222"/></svg>
    <button class="units">ММГС</button>
    <svg class="up" viewBox="0 0 6 4"><path d="M0 4h6L3 0z" fill="#333"/></svg>
    <svg class="tag" viewBox="0 0 16 14"><path d="M1 4.500L4 1l9 1 2 6-4 5-8-3z" fill="#eee" stroke="#444"/><circle cx="7" cy="5" r="2" fill="#fff" stroke="#444"/><path d="M3 8l7 3 4-5" fill="none" stroke="#555"/></svg>
  </div>
</footer>

<div class="taskbar">
  <button class="start" aria-label="Start"><svg viewBox="0 0 16 16"><path d="M0 2.300l7-1v6.200H0zM8 1.200L16 0v7.500H8zM0 8.500h7v6.200l-7-1zM8 8.500h8V16l-8-1.200z" fill="#fff"/></svg></button>
  <label class="wsearch"><svg viewBox="0 0 18 18"><circle cx="11" cy="6.500" r="5.500" fill="none" stroke="#222" stroke-width="1.300"/><path d="M7 10.500L1 17" stroke="#222" stroke-width="1.500"/></svg><input type="text" placeholder="Type here to search" aria-label="Search"></label>
  <div class="apps">
    <button><svg viewBox="0 0 24 24"><circle cx="12" cy="12" r="12" fill="#1768b5"/><path d="M0 11C1-2 22-4 24 10c0 6-7 7-9 4 3-4-1-7-5-7-5 0-8 3-10 4z" fill="url(#edgeg)"/><path d="M9 10c-4 5 1 12 13 9-5 5-12 6-17 1C1 15 4 9 9 10z" fill="#2c8fdc"/><path d="M15 14c-2-1-2-3-1-4-2-2-5 0-4 4s6 5 11 3c-2 1-6 0-6-3z" fill="#0d2430"/></svg></button>
    <button class="live"><svg viewBox="0 0 24 24"><path d="M1 3h8l2 2h12v17H1z" fill="#e8a93a"/><path d="M1 7h22v14H1z" fill="#fbd97b"/><path d="M5 21v-8h14v8h-4v-4H9v4z" fill="#3b94d4"/></svg></button>
    <button><svg viewBox="0 0 24 24"><path d="M8 7c0-8 8-8 8 0" fill="none" stroke="#fff" stroke-width="1.500"/><path d="M1 6h22v17H1z" fill="#fff"/><path d="M6 9h5v5H6z" fill="#e04f2e"/><path d="M13 9h5v5h-5z" fill="#7ab53a"/><path d="M6 16h5v5H6z" fill="#2f9edb"/><path d="M13 16h5v5h-5z" fill="#f2b72c"/></svg></button>
    <button><svg viewBox="0 0 24 24"><path d="M0 8l12-6 12 6v13H0z" fill="#fff"/><path d="M1 8h22l-9 6 3 3L0 9z" fill="#04141e"/></svg></button>
    <button class="active"><svg viewBox="0 0 24 24"><path d="M1 3l10-3 12 3v13l-6 5H3l-2-4z" fill="#c92026"/><path d="M1 3l10-3 12 3-4 2H3z" fill="#e84a45"/><text x="7" y="15" class="swl">S</text><text x="17" y="15" class="swl">W</text><path d="M4 15h20v9H4z" fill="#151515"/><text x="14" y="23" class="swy">2024</text></svg></button>
  </div>
  <div class="tray">
    <svg class="chev" viewBox="0 0 12 8"><path d="M1 6.500L6 1.500l5 5" fill="none" stroke="#fff" stroke-width="1.300"/></svg>
    <svg viewBox="0 0 16 16" fill="none" stroke="#fff"><circle cx="7.500" cy="7.500" r="7"/><path d="M.500 7.500h14M7.500.500v14M2 3.500h11M2 11.500h7M7.500.500c-5 5-4 9 0 14M7.500.500c4 4 4 7 3 9"/><circle cx="12.500" cy="12.500" r="3" fill="#04121c"/><path d="M10.500 14.500l4-4"/></svg>
    <svg viewBox="0 0 16 16" fill="none" stroke="#fff"><path d="M.500 5.500h3l4-4v13l-4-4h-3zM9.500 5.500c1 1.500 1 3.500 0 5M11.500 3.500c2 3 2 6 0 9M13.500 1.500c3 4 3 9 0 13"/></svg>
    <time>11:31 PM<br>2/13/2024</time>
    <svg class="note" viewBox="0 0 16 16"><path d="M.700.700h14.600v11h-5L8 14.500l-2.500-2.800H.700z" fill="none" stroke="#fff" stroke-width="1.300"/></svg>
  </div>
</div>
<script src="model.js"></script>
</body>
</html>
```

FILE: styles.css
```css
* { box-sizing: border-box; }
body {
  margin: 0;
  height: 100vh;
  display: flex;
  flex-direction: column;
  overflow: hidden;
  background: #f7f7f7;
  color: #111;
  font: 12px/16px Roboto, "Noto Sans", sans-serif;
}
button, input { font: inherit; color: inherit; border: 0; padding: 0; margin: 0; background: none; outline: 0; }
button { display: flex; align-items: center; justify-content: center; }
svg { display: block; flex: none; }
.sprite { position: absolute; width: 0; height: 0; }
.i { width: 20px; height: 20px; }
.flip { transform: scaleX(-1); }

/* title bar */
.titlebar { display: flex; align-items: center; height: 35px; border-top: 1px solid #bbb; border-bottom: 1px solid #c4c4c4; position: relative; flex: none; }
.brand { display: flex; align-items: center; width: 143px; height: 100%; border-right: 1px solid #c0c0c0; padding-left: 4px; }
.ds { width: 22px; height: 22px; margin-right: 3px; }
.brand-name { color: #c8322b; font: italic 14px/20px "Open Sans", sans-serif; flex: 1; }
.brand-name b { font-weight: 800; }
.play { width: 0; height: 0; border: 5px solid transparent; border-left: 5px solid #777; border-right: 0; margin-right: 6px; }
.quick { display: flex; align-items: center; padding-left: 21px; height: 100%; }
.q { width: 30px; }
.c { width: 14px; color: #333; }
.c svg, .selc svg { width: 8px; height: 8px; }
.off { color: #999; }
.select-tool { display: flex; width: 44px; height: 29px; border: 1px solid #888; }
.sel { width: 30px; background: #b4b2b0; border-right: 1px solid #777; }
.selc { flex: 1; }
.doc-title { position: absolute; left: 841px; font: 400 11px/16px "Noto Sans", sans-serif; margin: 0; }
.title-right { display: flex; align-items: center; margin-left: auto; padding-right: 3px; }
.search { display: flex; align-items: center; width: 248px; height: 23px; border: 1px solid #bbb; background: #fff; margin-right: 3px; }
.search input { flex: 1; min-width: 0; padding-left: 6px; color: #4e6150; }
.search input::placeholder { color: #4e6150; opacity: 1; }
.prompt { width: 14px; height: 14px; margin-left: 6px; }
.search-go { display: flex; align-items: center; width: 36px; height: 100%; border-left: 1px solid #ddd; padding-left: 5px; gap: 6px; }
.lens { width: 14px; height: 14px; }
.sc { width: 8px; height: 8px; color: #666; }
.w { width: 36px; color: #333; }
.s { width: 16px; height: 16px; }

/* ribbon */
.ribbon { display: flex; height: 82px; border-bottom: 1px solid #777; flex: none; padding-bottom: 2px; font: 11px/16px "Noto Sans", sans-serif; }
.group { display: flex; border-right: 1px solid #c4c4c4; flex: none; }
.big { flex: none; flex-direction: column; justify-content: flex-start; padding-top: 6px; line-height: 13px; text-align: center; white-space: nowrap; }
.big span { padding-top: 1px; }
.group .big { width: 74px; }
.g1 .big { width: 122px; }
.g1 { padding-left: 6px; width: 484px; }
.g2 { width: 373px; }
.g3 { width: 398px; }
.g4 { width: 129px; padding-left: 2px; }
.dc { width: 8px; height: 8px; margin-top: auto; margin-bottom: 7px; }
.list { display: flex; flex-direction: column; flex: none; padding: 1px 0 0 2px; }
.g3 .list { width: 94px; padding-left: 5px; }
.row { height: 26px; gap: 6px; justify-content: flex-start; white-space: nowrap; }
.group .short { width: 68px; }
.group .mid { width: 62px; }
.group .narrow { width: 50px; }
.g2 .list { padding-left: 4px; }
.instant { width: 46px; background: #b2b1b0; border: 1px solid #666; margin: 1px 0 0 1px; padding-top: 4px; }
.collapse { margin-left: auto; align-items: flex-end; padding: 0 8px 7px 0; }
.collapse svg { width: 12px; height: 8px; }

/* workspace */
.workspace { flex: 1; display: flex; min-height: 0; position: relative; }
.tabs { position: absolute; z-index: 2; left: 0; top: 0; display: flex; height: 22px; }
.tab { height: 22px; background: #d3d3d3; border: solid #808080; border-width: 0 1px 1px 0; color: #222; white-space: nowrap; width: 56px; }
.tab:nth-child(3) { width: 90px; }
.tab:nth-child(4) { width: 100px; }
.tab:nth-child(5) { width: 107px; }
.tab:nth-child(6) { width: 158px; }
.tab.on { width: 75px; background: #f7f7f7; font-weight: 700; color: #46443c; border-bottom-color: #f7f7f7; }
.panel { width: 243px; display: flex; flex-direction: column; padding-top: 22px; background: #f7f7f7; border-right: 1px solid #808080; border-left: 1px solid #bbb; overflow: hidden; flex: none; }
.grip { height: 20px; border-top: 1px solid #999; border-bottom: 1px solid #ccc; display: flex; align-items: center; justify-content: center; padding: 4px 4px 0 0; flex: none; }
.grip i, .splitter i { width: 6px; height: 6px; border-radius: 50%; border: 1px solid #999; background: #ccc; }
.ptabs { display: flex; height: 26px; margin: 4px 0 0 1px; flex: none; }
.ptab { width: 40px; background: #d6d6d6; border: 1px solid #999; border-left: 0; }
.ptab.on { background: #f7f7f7; border-bottom: 0; }
.pmore { flex: 1; padding-left: 15px; }
.pmore svg { width: 8px; height: 12px; }
.filter { display: flex; align-items: center; height: 26px; margin: 0 5px 0 4px; border: 1px solid #bbb; flex: none; }
.filter input { flex: 1; min-width: 0; }
.tree { list-style: none; margin: 1px 2px 0 0; padding: 0; overflow: hidden; flex: none; }
.tree li { display: flex; align-items: center; height: 22px; padding-left: 25px; gap: 4px; white-space: nowrap; position: relative; }
.tree .root { padding-left: 3px; gap: 3px; }
.kids::before { content: ""; position: absolute; left: 9px; top: 6px; border: 4px solid transparent; border-left: 5px solid #555; border-right: 0; }
.rollback { height: 3px; background: #3d86c0; flex: none; margin: -1px 2px 0 0; }
.hscroll { display: flex; align-items: center; height: 16px; margin: auto 2px 0 0; background: #eee; padding: 0 3px; gap: 6px; flex: none; }
.hscroll svg { width: 8px; height: 10px; }
.track { flex: 1; height: 16px; }
.track i { display: block; width: 86%; height: 16px; background: #cdcdcd; }
.foot { height: 5px; border-top: 1px solid #aaa; border-bottom: 1px solid #ccc; flex: none; }

.viewport { flex: 1; position: relative; background: #c3c8d3; min-width: 0; }
#model { position: absolute; inset: 0; width: 100%; height: 100%; }
.splitter { position: absolute; left: -2px; top: 335px; width: 10px; height: 39px; background: #f7f7f7; border: 1px solid #999; border-left: 0; display: flex; align-items: center; justify-content: center; }
.hud { position: absolute; top: 3px; left: 0; right: 4px; display: flex; justify-content: center; height: 24px; opacity: .9; }
.hud button { width: 26px; }
.hud .hc { width: 14px; color: #777; }
.hc svg { width: 8px; height: 8px; }
.docwin { position: absolute; top: 7px; right: 6px; display: flex; color: #85878b; }
.docwin button { width: 26px; }
.docwin svg { width: 15px; height: 15px; }
.taskpane { position: absolute; right: 0; top: 50px; width: 26px; border: 1px solid #777; border-right: 0; }
.taskpane button { width: 25px; height: 24px; background: #d2d2d2; border-bottom: 1px solid #888; }
.taskpane button.on { background: #f7f7f7; }
.taskpane .i { width: 19px; height: 19px; }
.triad { position: absolute; left: 11px; bottom: 0; font-family: "Liberation Serif", serif; }
.triad svg { width: 64px; height: 60px; overflow: visible; font-size: 13px; }
.triad p { margin: 16px 0 1px 2px; font-weight: 700; color: #0a1a22; }

/* model tabs and status */
.modeltabs { display: flex; height: 16px; border-top: 1px solid #888; border-bottom: 1px solid #888; flex: none; }
.navs { display: flex; width: 67px; padding-left: 2px; border-right: 1px solid #888; }
.navs button { width: 16px; background: #c4c2c0; border: 1px solid #a5a5a5; }
.navs svg { width: 10px; height: 10px; }
.mtab { width: 126px; background: #d3d3d3; border-right: 1px solid #888; }
.mtab.on { width: 68px; background: #f7f7f7; font-weight: 700; }
.mtab.study { width: 108px; padding-right: 6px; }
.status { display: flex; align-items: center; height: 18px; padding: 1px 1px 0; flex: none; }
.status-right { display: flex; align-items: center; margin-left: auto; }
.warn { width: 16px; height: 16px; margin-right: 90px; }
.up { width: 6px; height: 4px; margin: 0 27px 0 35px; }
.tag { width: 16px; height: 14px; margin-right: 2px; }

/* taskbar */
.taskbar { display: flex; height: 40px; background: #04141e; color: #fff; flex: none; }
.start { width: 48px; }
.start svg { width: 16px; height: 16px; }
.wsearch { display: flex; align-items: center; width: 344px; background: #f1f1f1; border: 1px solid #bbb; padding-left: 11px; gap: 10px; color: #333; font-size: 15px; }
.wsearch svg { width: 18px; height: 18px; }
.wsearch input { flex: 1; min-width: 0; }
.wsearch input::placeholder { color: #444; opacity: 1; }
.apps { display: flex; padding-left: 3px; }
.apps button { width: 48px; border-bottom: 2px solid transparent; margin-right: 1px; }
.apps svg { width: 24px; height: 24px; }
.apps .live { border-bottom-color: #76b9ed; }
.apps .active { background: #35474f; border-bottom-color: #76b9ed; }
.swl { font: 700 12px "Open Sans", sans-serif; fill: #fff; text-anchor: middle; }
.swy { font: 700 9px "Open Sans", sans-serif; fill: #fff; text-anchor: middle; }
.tray { display: flex; align-items: center; margin-left: auto; gap: 8px; padding-right: 24px; }
.tray svg { width: 16px; height: 16px; }
.tray .chev { width: 12px; height: 8px; margin-right: 2px; }
.tray time { text-align: center; line-height: 18px; width: 58px; margin-right: 7px; }
```

FILE: model.js
```js
// Draws the torsion spring as a shaded tube with a depth buffer, isometric view.
(function () {
  var canvas = document.getElementById("model");
  var w = canvas.clientWidth, h = canvas.clientHeight;
  canvas.width = w;
  canvas.height = h;
  var ctx = canvas.getContext("2d");
  var img = ctx.createImageData(w, h);
  var depth = new Float32Array(w * h).fill(-1e9);
  var ox = w / 2 - 60, oy = h / 2 - 34, r = 9;
  var cutX = -1e9; // surface with a smaller X is trimmed, which gives a flat wire end

  function smooth(t) { t = Math.max(0, Math.min(1, t)); return t * t * (3 - 2 * t); }

  function sphere(X, Y, Z) {
    var cx = ox + 0.7071 * (X - Z);
    var cy = oy + 0.4082 * (X + Z) - 0.8165 * Y;
    var cz = 0.57735 * (X + Y + Z);
    for (var y = Math.ceil(cy - r); y <= cy + r; y++) {
      for (var x = Math.ceil(cx - r); x <= cx + r; x++) {
        if (x < 0 || y < 0 || x >= w || y >= h) continue;
        var nx = (x - cx) / r, ny = (y - cy) / r, q = 1 - nx * nx - ny * ny;
        if (q < 0) continue;
        var nz = Math.sqrt(q), z = cz + nz * r, k = y * w + x;
        if (z <= depth[k]) continue;
        if (X + r * (0.7071 * nx + 0.4082 * ny + 0.57735 * nz) < cutX) continue;
        depth[k] = z;
        var d = Math.max(0, -0.2 * nx - 0.6 * ny + 0.75 * nz);
        var v = 64 + 76 * nz + 40 * d * (0.5 + 0.5 * nz) + 34 * Math.pow(nz, 20);
        img.data[k * 4] = v + 1;
        img.data[k * 4 + 1] = v - 2;
        img.data[k * 4 + 2] = v - 5;
        img.data[k * 4 + 3] = 255;
      }
    }
  }

  function both(p) { sphere(p[0], p[1], p[2]); sphere(p[0], p[1], -p[2]); }

  function line(a, b) {
    var n = Math.ceil(Math.hypot(b[0] - a[0], b[1] - a[1], b[2] - a[2]) * 2) + 1;
    for (var i = 0; i <= n; i++) both(mix(a, b, i / n));
  }
  function mix(a, b, t) { return [0, 1, 2].map(function (i) { return a[i] + (b[i] - a[i]) * t; }); }
  function toward(a, b, d) {
    return mix(a, b, d / Math.hypot(b[0] - a[0], b[1] - a[1], b[2] - a[2]));
  }
  function bend(a, c, b) {
    for (var i = 0; i <= 160; i++) both(mix(mix(a, c, i / 160), mix(c, b, i / 160), i / 160));
  }

  // Coils: wide turns first, then a tighter and narrower end.
  var marks = [[0, 53.5], [4, 205.5], [5, 236], [6, 258], [7, 280], [7.7, 296]];
  function lead(t) {
    for (var i = 1; i < marks.length; i++) {
      if (t <= marks[i][0]) {
        var a = marks[i - 1], b = marks[i];
        return a[1] + (b[1] - a[1]) * (t - a[0]) / (b[0] - a[0]);
      }
    }
    return 296;
  }
  for (var t = 0; t <= 7.6; t += 0.0012) {
    var R = 59.6 - 18.3 * smooth((t - 4) / 0.7), ang = Math.PI / 2 + t * 2 * Math.PI;
    both([R * Math.cos(ang), R * Math.sin(ang), lead(t)]);
  }

  // Hook at the outer end.
  cutX = -3;
  var hook = [[13, -39, 291], [25, -34, 293], [37, -22, 296], [44, -1, 302], [44, 13, 318], [37, 11, 335], [35, 4, 347], [37, -14, 361], [23, -33, 364], [4, -42, 363], [-14, -41, 363], [-24, -38, 363]];
  for (var s = 1; s < hook.length - 2; s++) {
    for (var j = 0; j <= 80; j++) {
      var u = j / 80;
      both([0, 1, 2].map(function (i) {
        var a = hook[s - 1][i], b = hook[s][i], c = hook[s + 1][i], d = hook[s + 2][i];
        return 0.5 * (2 * b + (c - a) * u + (2 * a - 5 * b + 4 * c - d) * u * u + (3 * b - a - 3 * c + d) * u * u * u);
      }));
    }
  }
  cutX = -1e9;

  // Central loop.
  var A = [0, 59.6, 53.5], B = [190, 59.6, 53.5], C = [238, 16, 55], D = [238, 16, 0];
  var b1 = toward(B, A, 18), b2 = toward(B, C, 18), c1 = toward(C, B, 29), c2 = toward(C, D, 29);
  line(A, b1);
  bend(b1, B, b2);
  line(b2, c1);
  bend(c1, C, c2);
  line(c2, D);

  ctx.putImageData(img, 0, 0);
})();
```
